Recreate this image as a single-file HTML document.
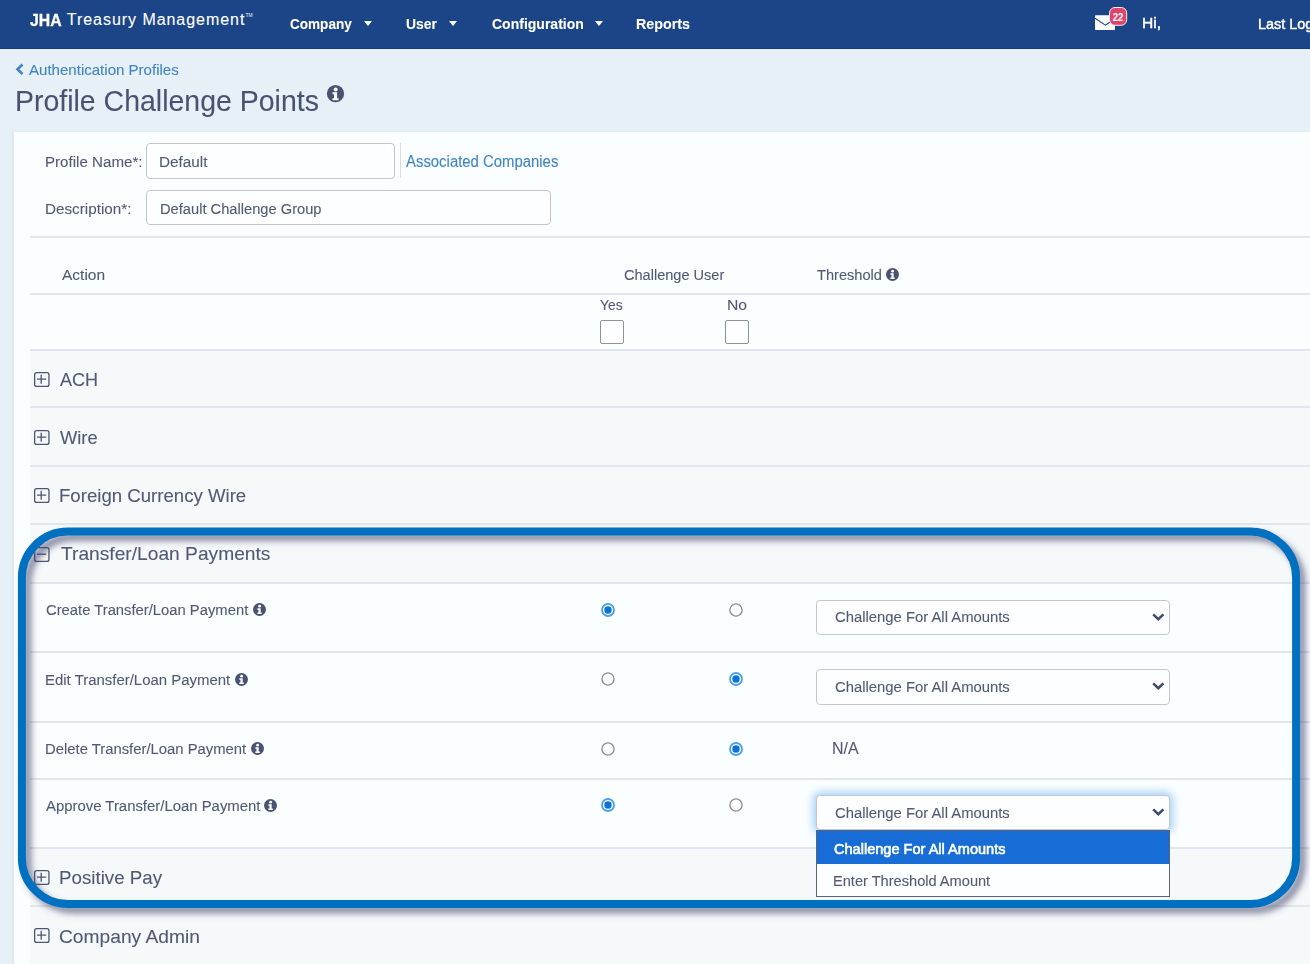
<!DOCTYPE html>
<html><head><meta charset="utf-8">
<style>
html,body{margin:0;padding:0;}
body{width:1310px;height:964px;overflow:hidden;position:relative;background:#e7f0f7;font-family:"Liberation Sans",sans-serif;}
.t{position:absolute;white-space:nowrap;transform-origin:0 0;font-family:"Liberation Sans",sans-serif;}
.abs{position:absolute;}
#hdr{position:absolute;left:0;top:0;width:1310px;height:49px;background:#1c4587;border-bottom:0;}
#hdrb{position:absolute;left:0;top:48px;width:1310px;height:1px;background:#15397a;}
.caret{position:absolute;width:0;height:0;border-left:4.5px solid transparent;border-right:4.5px solid transparent;border-top:5px solid #fff;}
#panel{position:absolute;left:14px;top:132px;width:1300px;height:840px;background:#fbfeff;box-shadow:-2px 0 2px rgba(190,205,222,0.25);}
.inp{position:absolute;box-sizing:border-box;border:1px solid #c3c7ce;border-radius:4px;background:#fdfeff;}
.line{position:absolute;left:30px;width:1280px;height:2px;background:#e2e6ea;}
.sec{position:absolute;left:30px;width:1280px;background:#f6f9fa;}
.cb{position:absolute;box-sizing:border-box;width:24px;height:24px;border:1.5px solid #8d929d;border-radius:2px;background:#fdfeff;}
.sel{position:absolute;left:816px;width:354px;height:35px;box-sizing:border-box;border:1px solid #c3c7ce;border-radius:4px;background:#fdfeff;}
svg.ic{position:absolute;overflow:visible;}
</style></head><body>
<div id="hdr"></div><div id="hdrb"></div>
<div class="t" style="left:245.5px;top:13px;font-size:5px;line-height:5px;color:#f0f3f8;">TM</div>
<div class="caret" style="left:364px;top:21px;"></div>
<div class="caret" style="left:449px;top:21px;"></div>
<div class="caret" style="left:594.5px;top:21px;"></div>
<!-- mail -->
<svg class="ic" style="left:1095px;top:15px;" width="21" height="15" viewBox="0 0 21 15">
 <rect x="0" y="0.2" width="20" height="14.8" rx="0.8" fill="#fff"/>
 <polyline points="0,3.2 10.4,10.2 16,6.5" fill="none" stroke="#1c4587" stroke-width="1.1"/>
</svg>
<svg class="ic" style="left:1109px;top:7px;" width="19" height="19" viewBox="0 0 19 19">
 <rect x="0.5" y="0.5" width="17.2" height="17.8" rx="5.5" fill="#e0466b" stroke="#fbe9ee" stroke-width="1"/>
 <text x="9" y="13.6" text-anchor="middle" font-family="Liberation Sans" font-size="10.6" font-weight="700" fill="#fff" transform="translate(9 0) scale(0.9 1) translate(-9 0)">22</text>
</svg>
<!-- breadcrumb chevron -->
<svg class="ic" style="left:15px;top:63px;" width="10" height="13" viewBox="0 0 10 13">
 <polyline points="7.5,1.5 2.5,6.3 7.5,11" fill="none" stroke="#3f84c5" stroke-width="2.6" stroke-linecap="butt" stroke-linejoin="miter"/>
</svg>
<!-- title info -->
<svg class="ic" style="left:326px;top:85px;" width="19" height="18" viewBox="0 0 20 20">
 <circle cx="10" cy="9.7" r="9.6" fill="#4a5272"/>
 <circle cx="10.2" cy="4.9" r="2.2" fill="#fff"/>
 <path d="M6.7 8.1 H11.8 V14.6 H13.5 V16.9 H6.7 V14.6 H8.4 V10.3 H6.7 Z" fill="#fff"/>
</svg>
<div id="panel"></div>
<div class="inp" style="left:146px;top:143px;width:249px;height:35.5px;"></div>
<div class="abs" style="left:400px;top:143px;width:1px;height:35px;background:#d9dde2;"></div>
<div class="inp" style="left:146px;top:190px;width:404.5px;height:35px;"></div>

<!-- section backgrounds -->
<div class="sec" style="top:350px;height:57px;"></div>
<div class="sec" style="top:407px;height:59px;"></div>
<div class="sec" style="top:466px;height:58px;"></div>
<div class="sec" style="top:524px;height:59px;"></div>
<div class="sec" style="top:848px;height:58px;"></div>
<div class="sec" style="top:906px;height:58px;"></div>
<!-- lines -->
<div class="line" style="top:236px;"></div>
<div class="line" style="top:293px;"></div>
<div class="line" style="top:349px;"></div>
<div class="line" style="top:406px;"></div>
<div class="line" style="top:465px;"></div>
<div class="line" style="top:523px;"></div>
<div class="line" style="top:582px;"></div>
<div class="line" style="top:651px;"></div>
<div class="line" style="top:720.5px;"></div>
<div class="line" style="top:777.5px;"></div>
<div class="line" style="top:847px;"></div>
<div class="line" style="top:905px;"></div>

<!-- checkboxes -->
<div class="cb" style="left:600px;top:319.5px;"></div>
<div class="cb" style="left:725px;top:319.5px;"></div>

<!-- plus/minus boxes -->
<svg class="ic" style="left:34px;top:372px;" width="16" height="15" viewBox="0 0 16 15"><rect x="0.65" y="0.65" width="14.3" height="13.8" rx="2" fill="none" stroke="#4d5574" stroke-width="1.3"/><path d="M7.2 2.7 V11.7 M3 7.2 H12.2" stroke="#4d5574" stroke-width="1.3"/></svg>
<svg class="ic" style="left:34px;top:430px;" width="16" height="15" viewBox="0 0 16 15"><rect x="0.65" y="0.65" width="14.3" height="13.8" rx="2" fill="none" stroke="#4d5574" stroke-width="1.3"/><path d="M7.2 2.7 V11.7 M3 7.2 H12.2" stroke="#4d5574" stroke-width="1.3"/></svg>
<svg class="ic" style="left:34px;top:488px;" width="16" height="15" viewBox="0 0 16 15"><rect x="0.65" y="0.65" width="14.3" height="13.8" rx="2" fill="none" stroke="#4d5574" stroke-width="1.3"/><path d="M7.2 2.7 V11.7 M3 7.2 H12.2" stroke="#4d5574" stroke-width="1.3"/></svg>
<svg class="ic" style="left:34px;top:546.5px;" width="16" height="15" viewBox="0 0 16 15"><rect x="0.65" y="0.65" width="14.3" height="13.8" rx="2" fill="none" stroke="#4d5574" stroke-width="1.3"/><path d="M3 7.2 H12.2" stroke="#4d5574" stroke-width="1.3"/></svg>
<svg class="ic" style="left:34px;top:869.5px;" width="16" height="15" viewBox="0 0 16 15"><rect x="0.65" y="0.65" width="14.3" height="13.8" rx="2" fill="none" stroke="#4d5574" stroke-width="1.3"/><path d="M7.2 2.7 V11.7 M3 7.2 H12.2" stroke="#4d5574" stroke-width="1.3"/></svg>
<svg class="ic" style="left:34px;top:928px;" width="16" height="15" viewBox="0 0 16 15"><rect x="0.65" y="0.65" width="14.3" height="13.8" rx="2" fill="none" stroke="#4d5574" stroke-width="1.3"/><path d="M7.2 2.7 V11.7 M3 7.2 H12.2" stroke="#4d5574" stroke-width="1.3"/></svg>

<!-- info icons -->
<svg class="ic" style="left:886px;top:268px;" width="13" height="13" viewBox="0 0 20 20"><circle cx="10" cy="10" r="10" fill="#4a5272"/><circle cx="10.2" cy="4.9" r="2.2" fill="#fff"/><path d="M6.7 8.1 H11.8 V14.6 H13.5 V16.9 H6.7 V14.6 H8.4 V10.3 H6.7 Z" fill="#fff"/></svg>
<svg class="ic" style="left:253px;top:603.3px;" width="13" height="13" viewBox="0 0 20 20"><circle cx="10" cy="10" r="10" fill="#4a5272"/><circle cx="10.2" cy="4.9" r="2.2" fill="#fff"/><path d="M6.7 8.1 H11.8 V14.6 H13.5 V16.9 H6.7 V14.6 H8.4 V10.3 H6.7 Z" fill="#fff"/></svg>
<svg class="ic" style="left:235px;top:672.8px;" width="13" height="13" viewBox="0 0 20 20"><circle cx="10" cy="10" r="10" fill="#4a5272"/><circle cx="10.2" cy="4.9" r="2.2" fill="#fff"/><path d="M6.7 8.1 H11.8 V14.6 H13.5 V16.9 H6.7 V14.6 H8.4 V10.3 H6.7 Z" fill="#fff"/></svg>
<svg class="ic" style="left:251.3px;top:742px;" width="13" height="13" viewBox="0 0 20 20"><circle cx="10" cy="10" r="10" fill="#4a5272"/><circle cx="10.2" cy="4.9" r="2.2" fill="#fff"/><path d="M6.7 8.1 H11.8 V14.6 H13.5 V16.9 H6.7 V14.6 H8.4 V10.3 H6.7 Z" fill="#fff"/></svg>
<svg class="ic" style="left:264.2px;top:799px;" width="13" height="13" viewBox="0 0 20 20"><circle cx="10" cy="10" r="10" fill="#4a5272"/><circle cx="10.2" cy="4.9" r="2.2" fill="#fff"/><path d="M6.7 8.1 H11.8 V14.6 H13.5 V16.9 H6.7 V14.6 H8.4 V10.3 H6.7 Z" fill="#fff"/></svg>

<!-- radios -->
<svg class="ic" style="left:600.7px;top:602.7px;" width="14" height="14" viewBox="0 0 14 14"><circle cx="7" cy="7" r="6" fill="#fff" stroke="#4ea2ea" stroke-width="1.8"/><circle cx="7" cy="7" r="3.7" fill="#0a72d8"/></svg>
<svg class="ic" style="left:728.6px;top:602.7px;" width="14" height="14" viewBox="0 0 14 14"><circle cx="7" cy="7" r="6.1" fill="#fff" stroke="#8c919e" stroke-width="1.4"/></svg>
<svg class="ic" style="left:600.7px;top:672.3px;" width="14" height="14" viewBox="0 0 14 14"><circle cx="7" cy="7" r="6.1" fill="#fff" stroke="#8c919e" stroke-width="1.4"/></svg>
<svg class="ic" style="left:728.6px;top:672.3px;" width="14" height="14" viewBox="0 0 14 14"><circle cx="7" cy="7" r="6" fill="#fff" stroke="#4ea2ea" stroke-width="1.8"/><circle cx="7" cy="7" r="3.7" fill="#0a72d8"/></svg>
<svg class="ic" style="left:600.7px;top:741.8px;" width="14" height="14" viewBox="0 0 14 14"><circle cx="7" cy="7" r="6.1" fill="#fff" stroke="#8c919e" stroke-width="1.4"/></svg>
<svg class="ic" style="left:728.6px;top:741.8px;" width="14" height="14" viewBox="0 0 14 14"><circle cx="7" cy="7" r="6" fill="#fff" stroke="#4ea2ea" stroke-width="1.8"/><circle cx="7" cy="7" r="3.7" fill="#0a72d8"/></svg>
<svg class="ic" style="left:600.7px;top:798.2px;" width="14" height="14" viewBox="0 0 14 14"><circle cx="7" cy="7" r="6" fill="#fff" stroke="#4ea2ea" stroke-width="1.8"/><circle cx="7" cy="7" r="3.7" fill="#0a72d8"/></svg>
<svg class="ic" style="left:728.6px;top:798.2px;" width="14" height="14" viewBox="0 0 14 14"><circle cx="7" cy="7" r="6.1" fill="#fff" stroke="#8c919e" stroke-width="1.4"/></svg>

<!-- selects -->
<div class="sel" style="top:599.5px;"></div>
<div class="sel" style="top:669px;height:35.5px;"></div>
<div class="sel" style="top:795px;box-shadow:0 0 8px 3px rgba(110,180,235,0.6);"></div>
<svg class="ic" style="left:1151.5px;top:612.5px;" width="13" height="9" viewBox="0 0 13 9"><polyline points="1.2,1.3 6.3,6.2 11.4,1.3" fill="none" stroke="#3f4a6e" stroke-width="2.5"/></svg>
<svg class="ic" style="left:1151.5px;top:682px;" width="13" height="9" viewBox="0 0 13 9"><polyline points="1.2,1.3 6.3,6.2 11.4,1.3" fill="none" stroke="#3f4a6e" stroke-width="2.5"/></svg>
<svg class="ic" style="left:1151.5px;top:808px;" width="13" height="9" viewBox="0 0 13 9"><polyline points="1.2,1.3 6.3,6.2 11.4,1.3" fill="none" stroke="#3f4a6e" stroke-width="2.5"/></svg>

<!-- dropdown -->
<div class="abs" style="left:816px;top:830px;width:354px;height:67px;box-sizing:border-box;border:1px solid #5a6178;background:#fdfeff;"></div>
<div class="abs" style="left:817px;top:831px;width:352px;height:33px;background:#176cd6;"></div>

<div class="t" style="left:30.00px;top:11.83px;font-size:16.5px;line-height:16.5px;font-weight:700;color:#ffffff;transform:scaleX(0.9576);-webkit-text-stroke:0.3px #ffffff;">JHA</div>
<div class="t" style="left:66.80px;top:12.05px;font-size:16px;line-height:16px;font-weight:400;color:#ffffff;letter-spacing:0.956px;-webkit-text-stroke:0.1px #ffffff;">Treasury Management</div>
<div class="t" style="left:290.40px;top:15.58px;font-size:15.5px;line-height:15.5px;font-weight:700;color:#ffffff;transform:scaleX(0.8746);-webkit-text-stroke:0.1px #ffffff;">Company</div>
<div class="t" style="left:405.80px;top:15.58px;font-size:15.5px;line-height:15.5px;font-weight:700;color:#ffffff;transform:scaleX(0.8971);-webkit-text-stroke:0.1px #ffffff;">User</div>
<div class="t" style="left:492.00px;top:15.58px;font-size:15.5px;line-height:15.5px;font-weight:700;color:#ffffff;transform:scaleX(0.9040);-webkit-text-stroke:0.1px #ffffff;">Configuration</div>
<div class="t" style="left:636.08px;top:15.58px;font-size:15.5px;line-height:15.5px;font-weight:700;color:#ffffff;transform:scaleX(0.9228);-webkit-text-stroke:0.1px #ffffff;">Reports</div>
<div class="t" style="left:1142.39px;top:15.48px;font-size:15.5px;line-height:15.5px;font-weight:400;color:#ffffff;transform:scaleX(1.0059);-webkit-text-stroke:0.45px #ffffff;">Hi,</div>
<div class="t" style="left:1258.07px;top:15.68px;font-size:15.5px;line-height:15.5px;font-weight:400;color:#ffffff;transform:scaleX(0.9300);-webkit-text-stroke:0.45px #ffffff;">Last Login: 06/09/2023 10:15 AM</div>
<div class="t" style="left:29.20px;top:62.20px;font-size:15px;line-height:15px;font-weight:400;color:#3f84c5;transform:scaleX(1.0034);-webkit-text-stroke:0.1px #3f84c5;">Authentication Profiles</div>
<div class="t" style="left:14.60px;top:86.40px;font-size:30px;line-height:30px;font-weight:400;color:#4a5272;transform:scaleX(0.9491);-webkit-text-stroke:0.1px #4a5272;">Profile Challenge Points</div>
<div class="t" style="left:45.42px;top:153.78px;font-size:15.5px;line-height:15.5px;font-weight:400;color:#515975;transform:scaleX(0.9755);-webkit-text-stroke:0.1px #515975;">Profile Name*:</div>
<div class="t" style="left:158.81px;top:153.98px;font-size:15.5px;line-height:15.5px;font-weight:400;color:#515975;transform:scaleX(0.9875);-webkit-text-stroke:0.1px #515975;">Default</div>
<div class="t" style="left:405.80px;top:153.59px;font-size:15.6px;line-height:15.6px;font-weight:400;color:#3f84c5;transform:scaleX(0.9553);-webkit-text-stroke:0.1px #3f84c5;">Associated Companies</div>
<div class="t" style="left:45.42px;top:200.68px;font-size:15.5px;line-height:15.5px;font-weight:400;color:#515975;transform:scaleX(0.9837);-webkit-text-stroke:0.1px #515975;">Description*:</div>
<div class="t" style="left:159.65px;top:200.68px;font-size:15.5px;line-height:15.5px;font-weight:400;color:#515975;transform:scaleX(0.9467);-webkit-text-stroke:0.1px #515975;">Default Challenge Group</div>
<div class="t" style="left:61.90px;top:266.86px;font-size:15.4px;line-height:15.4px;font-weight:400;color:#515975;transform:scaleX(1.0071);-webkit-text-stroke:0.1px #515975;">Action</div>
<div class="t" style="left:624.40px;top:266.96px;font-size:15.4px;line-height:15.4px;font-weight:400;color:#515975;transform:scaleX(0.9453);-webkit-text-stroke:0.1px #515975;">Challenge User</div>
<div class="t" style="left:816.90px;top:266.96px;font-size:15.4px;line-height:15.4px;font-weight:400;color:#515975;transform:scaleX(0.9485);-webkit-text-stroke:0.1px #515975;">Threshold</div>
<div class="t" style="left:600.00px;top:298.42px;font-size:14.5px;line-height:14.5px;font-weight:400;color:#515975;transform:scaleX(0.9583);-webkit-text-stroke:0.1px #515975;">Yes</div>
<div class="t" style="left:727.12px;top:298.42px;font-size:14.5px;line-height:14.5px;font-weight:400;color:#515975;transform:scaleX(1.0824);-webkit-text-stroke:0.1px #515975;">No</div>
<div class="t" style="left:59.90px;top:370.41px;font-size:19.0px;line-height:19.0px;font-weight:400;color:#515975;transform:scaleX(0.9487);-webkit-text-stroke:0.1px #515975;">ACH</div>
<div class="t" style="left:60.00px;top:427.61px;font-size:19.0px;line-height:19.0px;font-weight:400;color:#515975;transform:scaleX(0.9641);-webkit-text-stroke:0.1px #515975;">Wire</div>
<div class="t" style="left:59.32px;top:485.71px;font-size:19.0px;line-height:19.0px;font-weight:400;color:#515975;transform:scaleX(0.9795);-webkit-text-stroke:0.1px #515975;">Foreign Currency Wire</div>
<div class="t" style="left:60.80px;top:544.31px;font-size:19.0px;line-height:19.0px;font-weight:400;color:#515975;transform:scaleX(1.0101);-webkit-text-stroke:0.1px #515975;">Transfer/Loan Payments</div>
<div class="t" style="left:59.31px;top:867.81px;font-size:19.0px;line-height:19.0px;font-weight:400;color:#515975;transform:scaleX(0.9856);-webkit-text-stroke:0.1px #515975;">Positive Pay</div>
<div class="t" style="left:59.29px;top:926.51px;font-size:19.0px;line-height:19.0px;font-weight:400;color:#515975;transform:scaleX(1.0109);-webkit-text-stroke:0.1px #515975;">Company Admin</div>
<div class="t" style="left:46.20px;top:602.08px;font-size:15.5px;line-height:15.5px;font-weight:400;color:#515975;transform:scaleX(0.9542);-webkit-text-stroke:0.1px #515975;">Create Transfer/Loan Payment</div>
<div class="t" style="left:45.44px;top:671.58px;font-size:15.5px;line-height:15.5px;font-weight:400;color:#515975;transform:scaleX(0.9639);-webkit-text-stroke:0.1px #515975;">Edit Transfer/Loan Payment</div>
<div class="t" style="left:45.34px;top:740.68px;font-size:15.5px;line-height:15.5px;font-weight:400;color:#515975;transform:scaleX(0.9571);-webkit-text-stroke:0.1px #515975;">Delete Transfer/Loan Payment</div>
<div class="t" style="left:46.00px;top:797.68px;font-size:15.5px;line-height:15.5px;font-weight:400;color:#515975;transform:scaleX(0.9610);-webkit-text-stroke:0.1px #515975;">Approve Transfer/Loan Payment</div>
<div class="t" style="left:834.70px;top:608.78px;font-size:15.5px;line-height:15.5px;font-weight:400;color:#515975;transform:scaleX(0.9568);-webkit-text-stroke:0.1px #515975;">Challenge For All Amounts</div>
<div class="t" style="left:834.70px;top:679.48px;font-size:15.5px;line-height:15.5px;font-weight:400;color:#515975;transform:scaleX(0.9568);-webkit-text-stroke:0.1px #515975;">Challenge For All Amounts</div>
<div class="t" style="left:831.58px;top:740.79px;font-size:15.6px;line-height:15.6px;font-weight:400;color:#515975;transform:scaleX(1.0240);-webkit-text-stroke:0.1px #515975;">N/A</div>
<div class="t" style="left:834.70px;top:804.68px;font-size:15.5px;line-height:15.5px;font-weight:400;color:#515975;transform:scaleX(0.9568);-webkit-text-stroke:0.1px #515975;">Challenge For All Amounts</div>
<div class="t" style="left:834.30px;top:840.50px;font-size:15px;line-height:15px;font-weight:400;color:#ffffff;transform:scaleX(0.9701);-webkit-text-stroke:0.6px #ffffff;">Challenge For All Amounts</div>
<div class="t" style="left:833.33px;top:873.10px;font-size:15px;line-height:15px;font-weight:400;color:#515975;transform:scaleX(0.9733);-webkit-text-stroke:0.1px #515975;">Enter Threshold Amount</div>

<!-- annotation frame -->
<svg class="ic" style="left:0;top:0;" width="1310" height="964" viewBox="0 0 1310 964">
 <defs><filter id="sh" x="-5%" y="-10%" width="110%" height="120%"><feDropShadow dx="5.5" dy="5.5" stdDeviation="3.2" flood-color="#3a4268" flood-opacity="0.6"/></filter></defs>
 <rect x="21.9" y="531.6" width="1274.2" height="372.4" rx="46" ry="46" fill="none" stroke="#0070c0" stroke-width="8" filter="url(#sh)"/>
</svg>
</body></html>
